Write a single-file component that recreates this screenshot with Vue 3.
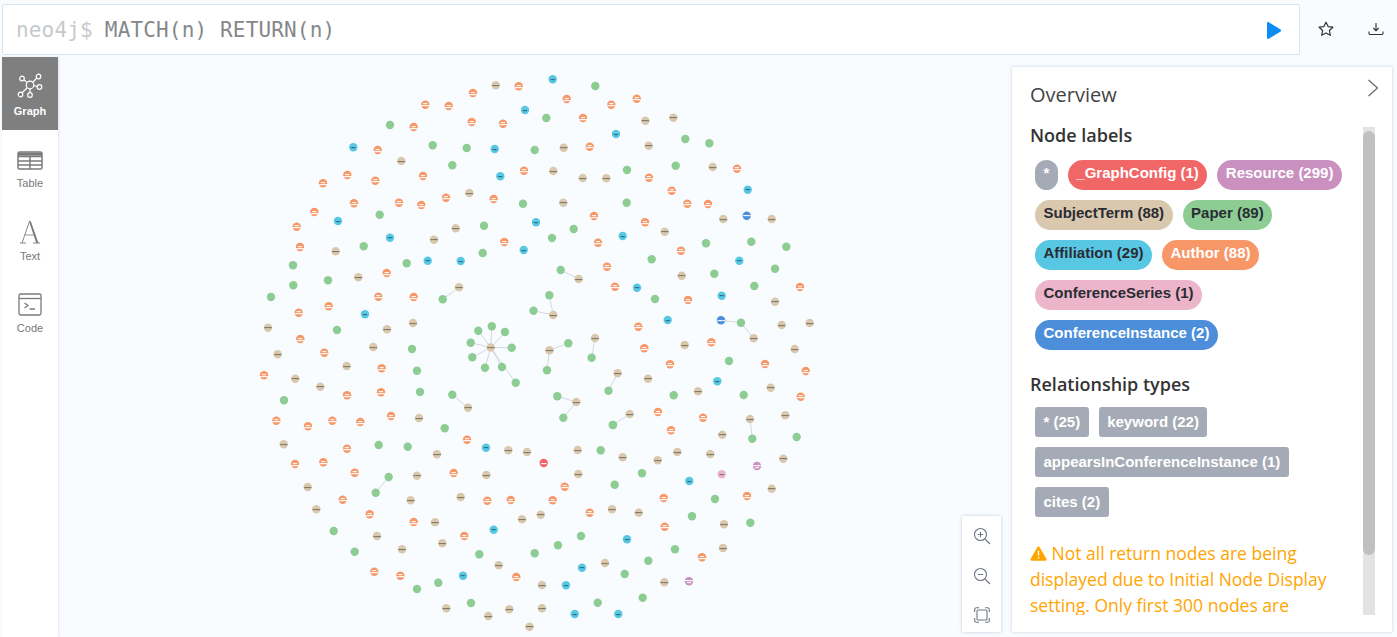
<script setup>
const colors = {
  g: '#8dcc93', t: '#d9c8ae', o: '#f79767', b: '#57c7e3',
  d: '#4c8eda', r: '#f16667', p: '#c990c0', k: '#ecb5c9'
}
// captions are tiny at this zoom level, only the colour tells them apart
const captions = {
  t: ['keyword'], o: ['Jens', 'Lehmann'], b: ['Univ.'],
  d: ['ISWC 18'], r: ['config'], p: ['Resource', 'item'], k: ['ISWC']
}
const captionColor = { o: '#fff', d: '#fff', r: '#fff', p: '#fff', t: '#7a7262', b: '#2a6272', k: '#7a7262' }

const raw = `t 495.7 85.3,o 518.7 86.3,o 473 93,o 425.3 104.7,o 448.7 106,b 525 110,g 390 125,o 413.7 127,o 471.7 122,o 503 123.7,
b 353.3 147.3,o 377.7 150,g 432.7 145.3,g 466.7 148,b 494.7 149,g 534.7 150,t 401.3 161,g 452.3 165.3,o 524 170.7,o 347.3 175,
o 323 183.3,o 375.3 180.7,o 423 176,b 500.3 176.3,t 469.3 193,o 446 197.7,o 493.7 199,g 523 203.7,o 354 203.3,o 399 202.7,
o 421.3 205,o 314.3 212,g 379.7 214.7,b 338 221,b 536 222.3,o 296.7 226.7,g 484 225.7,t 455.7 228.3,b 390 237.7,t 434 239.7,
o 504.3 242,o 300 247,g 363.7 246.3,t 335.7 251.3,b 523.7 250,g 482.7 253,b 427.7 260.7,b 460.7 261,g 406.7 263.3,g 293 265.3,
o 386.7 273,t 358.3 277.3,g 328 280.3,g 293.3 285.3,t 459 287.3,g 271 297,o 378.3 296.7,o 413.7 297,g 442.7 299.3,o 298.7 312.7,
o 328.7 306.3,b 365 314.3,g 533.5 310.7,t 268 327.7,g 337 330,t 387 329.3,t 413 323,o 300.3 339,t 373.3 347,g 412 349,
t 277.7 354.3,o 324.3 352.7,t 490.8 347.5,g 491.8 326.3,g 478.3 330.7,g 505 332,g 470.7 342.7,g 511.7 347.7,g 472.3 357.3,g 485 367.7,
g 502 367,g 515.7 382.7,t 468 407.7,g 452.3 394.7,t 553.2 315,t 549.5 350.3,g 568.3 343.3,g 547 370.3,t 595 338,g 591.6 357.8,
t 576.3 402,g 557.3 396.3,g 563.3 417.7,t 617.6 373.3,g 608.5 390.8,g 612.8 425,
b 552.7 79.3,g 595.3 86,o 566.7 99,o 611.3 104.7,o 636.7 98.7,g 546.3 118,o 583 118,t 645.3 120.7,t 673.3 117.7,b 616 134,
t 563.7 147.7,o 589.7 146.7,t 648.7 145.7,g 685.3 139,g 709.3 143.3,t 553.3 171,t 582.7 178,t 606.3 178.3,g 627 170,g 675.7 165.7,
t 712.7 167,o 737 168.7,o 649 177.7,o 671.7 190.7,b 747.7 189.7,t 563.3 202.7,g 626.7 202.7,o 687.3 203.7,o 708 204,d 746.7 215.7,
t 723.3 219,t 771.7 219,o 594 216,o 645 222.3,g 573.7 229,t 664.7 231.7,b 622.7 236,g 552 238,o 598 242.7,g 706 243.3,
g 751.3 241.7,g 786.3 246.7,o 681 250.7,b 739.3 260.7,g 651.7 259.3,o 607 266.7,g 775 268.7,t 681.7 275.7,g 714.3 273.7,g 560.7 270,
t 578.7 279,o 615 286.7,b 637 287.7,g 754.3 286,o 800 287,b 721.7 295.7,g 655 299,o 688 300,t 775 301.7,g 549.3 295.3,
b 667.7 320,d 721 320.3,g 741 322.7,t 753.7 338.3,t 781.7 325,t 809.7 323,o 638.3 326.7,o 644.3 348.3,t 684.7 345,o 711.3 342.3,
t 794.7 349,o 264 375.3,t 295.3 378.7,t 346.7 366,o 381.7 368.3,g 417 370.7,t 320.3 386.7,o 347 395.3,o 381 392.3,g 420 392,
g 284 400.3,o 276.3 420.7,o 308 426.3,o 332.3 420.7,o 360.3 422,o 391 416,t 419 418,g 444.7 428.3,o 467 439.7,t 283.7 444.3,
o 347 448.7,g 378.7 445,g 407.7 446.7,t 437 454.3,b 486 447.7,t 508.3 450.3,t 527 452,o 295 464,o 323.3 462.3,o 354.7 472.7,
g 388.7 477,t 417 475.7,o 453.7 473,t 486.3 475,t 307.7 487,g 375.7 492.7,t 410.7 500.3,t 460.7 497,o 487.3 500.7,o 510.7 500,
o 342.7 499.7,t 316.3 509.3,o 369.7 514.3,o 413.7 522,t 435 522.3,t 522 519.3,t 540.7 514.7,b 493.7 529.7,g 333.7 531,t 377 536,
o 464.3 536,t 442.3 543.3,t 402 549.3,g 354.7 551.7,g 479.3 554.3,g 534.7 553.3,t 498.7 565.3,o 374.3 571.7,o 400.3 575.7,b 463 575.7,
o 516.3 577,g 438.3 582.7,g 417 589,t 542 585,g 471 603,t 446.3 608.3,t 509.3 609.3,t 542 608.3,t 488.3 616,t 529.5 626.8,
o 670 364.3,g 729 361,o 765 364,o 805.7 371,t 648 378.7,b 717.3 381.3,t 698 391.3,t 770.7 387.7,g 673.7 395.3,g 743.7 395,
o 800.7 396.7,t 785.3 415.3,o 658 412,o 703 417.7,t 750 419,t 629.7 414,g 613 425,o 671 430.3,g 752.3 438.7,g 796.7 437,
t 722.3 434.7,t 577.7 450,g 600.7 450.3,t 622.7 457.3,t 677.3 452,t 710.3 454,t 657.7 460.3,r 543.7 463,t 578.3 474,g 642 473.3,
k 721.7 474.3,p 757 466,t 783.3 458.7,b 689.3 481,g 614.7 484.7,o 564.7 486.7,t 771.7 488.7,o 663.7 498,o 747 496,g 715 499,
o 552.7 500.3,o 589.7 512.7,t 612 509.3,t 638.7 512.7,g 692 516.3,t 724 524.3,g 750.3 522.7,o 664.7 526.7,g 581 536,b 627 539.3,
g 558 545.3,t 605 563,g 648.3 560.7,g 675 549.3,t 723 548,o 702 557.3,b 582 567.7,g 624.7 574,b 566 585.3,t 664.3 582.3,
p 689 581.3,g 642.7 597.7,g 597.7 602.7,b 574.7 614,b 618.3 614`

const nodes = raw.split(',').map((s) => {
  const [type, x, y] = s.trim().split(' ')
  return { type, x: +x, y: +y }
})

const c = [490.8, 347.5]
const edges = [
  [c[0], c[1], 491.8, 326.3], [c[0], c[1], 478.3, 330.7], [c[0], c[1], 505, 332],
  [c[0], c[1], 470.7, 342.7], [c[0], c[1], 511.7, 347.7], [c[0], c[1], 472.3, 357.3],
  [c[0], c[1], 485, 367.7], [c[0], c[1], 502, 367], [c[0], c[1], 515.7, 382.7],
  [442.7, 299.3, 459, 287.3], [560.7, 270, 578.7, 279], [533.5, 310.7, 553.2, 315],
  [549.3, 295.3, 553.2, 315], [549.5, 350.3, 568.3, 343.3], [549.5, 350.3, 547, 370.3],
  [595, 338, 591.6, 357.8], [452.3, 394.7, 468, 407.7], [388.7, 477, 375.7, 492.7],
  [617.6, 373.3, 608.5, 390.8], [576.3, 402, 557.3, 396.3], [576.3, 402, 563.3, 417.7],
  [629.7, 414, 613, 425], [750, 419, 752.3, 438.7], [721, 320.3, 741, 322.7],
  [741, 322.7, 753.7, 338.3]
]

const nodeLabels = [
  { text: '*', bg: '#a5abb6', fg: '#fff' },
  { text: '_GraphConfig (1)', bg: '#f16667', fg: '#fff' },
  { text: 'Resource (299)', bg: '#c990c0', fg: '#fff' },
  { text: 'SubjectTerm (88)', bg: '#d9c8ae', fg: '#2a2c34' },
  { text: 'Paper (89)', bg: '#8dcc93', fg: '#2a2c34' },
  { text: 'Affiliation (29)', bg: '#57c7e3', fg: '#2a2c34' },
  { text: 'Author (88)', bg: '#f79767', fg: '#fff' },
  { text: 'ConferenceSeries (1)', bg: '#ecb5c9', fg: '#2a2c34' },
  { text: 'ConferenceInstance (2)', bg: '#4c8eda', fg: '#fff' }
]
const relTypes = ['* (25)', 'keyword (22)', 'appearsInConferenceInstance (1)', 'cites (2)']
</script>

<template>
  <div class="page">
    <header class="topbar">
      <div class="editor">
        <span class="prompt">neo4j$</span>
        <span class="query">MATCH(n) RETURN(n)</span>
        <svg class="run" width="17" height="19" viewBox="0 0 17 19">
          <path d="M2 2.2v14.6c0 1 .9 1.5 1.7 1L15.6 10.4c.7-.4.7-1.4 0-1.8L3.7 1.2C2.9.7 2 1.2 2 2.2z" fill="#0b8df5" />
        </svg>
      </div>
      <div class="top-icons">
        <svg width="16" height="16" viewBox="0 0 16 16">
          <path d="M8 1.2l2.1 4.4 4.8.6-3.5 3.3.9 4.8L8 11.9l-4.3 2.4.9-4.8L1.1 6.2l4.8-.6z" fill="none" stroke="#2f3338" stroke-width="1.2" stroke-linejoin="round" />
        </svg>
        <svg width="16" height="14" viewBox="0 0 16 14">
          <path d="M8 1v7.5M5.3 6L8 8.7 10.7 6M1 9.5v1.7c0 .7.5 1.3 1.3 1.3h11.4c.8 0 1.300-.6 1.300-1.300V9.500" fill="none" stroke="#2f3338" stroke-width="1.1" />
        </svg>
      </div>
    </header>

    <div class="main">
      <nav class="sidebar">
        <div class="tab active">
          <svg width="26" height="26" viewBox="0 0 26 26" fill="none" stroke="#fff" stroke-width="1.2">
            <circle cx="13" cy="12" r="3.8" />
            <circle cx="5" cy="5.5" r="2.3" />
            <circle cx="21.5" cy="3.5" r="2.3" />
            <circle cx="22.5" cy="14" r="2.3" />
            <circle cx="3.5" cy="21.5" r="2.3" />
            <circle cx="13" cy="22" r="2.3" />
            <path d="M7 7l3.3 2.6M15.5 9.5l4.4-4.5M16.8 12.6l3.4.9M10.3 14.800l-5.200 5M13 15.800v3.900" />
          </svg>
          <span>Graph</span>
        </div>
        <div class="tab">
          <svg width="26" height="20" viewBox="0 0 26 20" fill="none" stroke="#7b7b7b" stroke-width="1.5">
            <rect x="1" y="1" width="24" height="17" rx="1.5" />
            <path d="M1 5.5h24M1 10h24M1 14h24M13 5.5V18" />
            <path d="M1 3.2h24" stroke-width="3" />
          </svg>
          <span>Table</span>
        </div>
        <div class="tab">
          <svg width="22" height="24" viewBox="0 0 22 24" fill="none" stroke="#7b7b7b">
            <path d="M1 23h6M14 23h7M3 23L10.6 1h.6L19 23" stroke-width=".9" />
            <path d="M5.8 15h10.5" stroke-width=".8" />
            <path d="M11 2l7 21" stroke-width="1.5" />
          </svg>
          <span>Text</span>
        </div>
        <div class="tab">
          <svg width="24" height="23" viewBox="0 0 24 23" fill="none" stroke="#7b7b7b" stroke-width="1.3">
            <rect x="1" y="1" width="22" height="21" rx="1.5" />
            <path d="M1 5.5h22" />
            <path d="M6.5 10l3.5 2.5-3.5 2.5M11.5 16H17" />
          </svg>
          <span>Code</span>
        </div>
      </nav>

      <section class="graph">
        <svg class="canvas" width="1339" height="580" viewBox="58 57 1339 580">
          <line v-for="(e, i) in edges" :key="i" :x1="e[0]" :y1="e[1]" :x2="e[2]" :y2="e[3]" class="edge" />
          <g v-for="(n, i) in nodes" :key="i">
            <circle :cx="n.x" :cy="n.y" r="4.2" :fill="colors[n.type]" />
            <template v-if="captions[n.type]">
              <text
                v-for="(line, j) in captions[n.type]"
                :key="j"
                :x="n.x"
                :y="n.y + 0.6 + (j - (captions[n.type].length - 1) / 2) * 2.2"
                :fill="captionColor[n.type]"
                :stroke="captionColor[n.type]"
                class="caption"
              >{{ line }}</text>
            </template>
          </g>
        </svg>

        <div class="zoom-box">
          <svg width="18" height="18" viewBox="0 0 18 18" fill="none" stroke="#6f7680" stroke-width="1.1">
            <circle cx="7.5" cy="7.5" r="6" />
            <path d="M12 12l5 5M7.5 4.8v5.4M4.8 7.5h5.4" />
          </svg>
          <svg width="18" height="18" viewBox="0 0 18 18" fill="none" stroke="#6f7680" stroke-width="1.1">
            <circle cx="7.5" cy="7.5" r="6" />
            <path d="M12 12l5 5M4.8 7.5h5.4" />
          </svg>
          <svg width="16" height="16" viewBox="0 0 16 16" fill="none" stroke="#6f7680" stroke-width="1.1">
            <rect x="3" y="3" width="10" height="10" rx="1" />
            <path d="M.7 5V2.5C.7 1.5 1.5.7 2.5.7H5M11 .7h2.5c1 0 1.8.8 1.8 1.8V5M15.3 11v2.5c0 1-.8 1.8-1.8 1.8H11M5 15.3H2.500c-1 0-1.800-.8-1.800-1.800V11" />
          </svg>
        </div>

        <aside class="overview">
          <h2>Overview</h2>
          <svg class="chevron" width="12" height="18" viewBox="0 0 12 18">
            <path d="M1.5 1l9 8-9 8" fill="none" stroke="#666" stroke-width="1.2" />
          </svg>
          <div class="scroll-area">
            <h3>Node labels</h3>
            <div class="tags first">
              <span
                v-for="l in nodeLabels"
                :key="l.text"
                class="pill"
                :style="{ background: l.bg, color: l.fg }"
              >{{ l.text }}</span>
            </div>
            <h3 class="rel-title">Relationship types</h3>
            <div class="tags">
              <span v-for="r in relTypes" :key="r" class="rel">{{ r }}</span>
            </div>
            <p class="warning">
              <svg width="17" height="15" viewBox="0 0 17 15">
                <path d="M8.5.5c.4 0 .8.2 1 .6l7 12c.4.7-.1 1.6-1 1.6h-14c-.9 0-1.400-.9-1-1.600l7-12c.2-.4.6-.6 1-.6z" fill="#ffa500" />
                <path d="M7.7 4.8h1.600l-.2 5H7.900zM7.700 11h1.600v1.600H7.700z" fill="#fff" />
              </svg>
              Not all return nodes are being displayed due to Initial Node Display setting. Only first 300 nodes are
              displayed.
            </p>
          </div>
          <div class="scrollbar"><div class="thumb"></div></div>
        </aside>
      </section>
    </div>
  </div>
</template>

<style scoped>
.page {
  height: 637px;
  display: flex;
  flex-direction: column;
  background: #f9fcff;
  overflow: hidden;
}

.topbar {
  display: flex;
  align-items: center;
  height: 57px;
  padding: 4px 0 3px 2px;
  box-sizing: border-box;
}

.editor {
  width: 1298px;
  height: 51px;
  box-sizing: border-box;
  display: flex;
  align-items: center;
  padding: 1px 17px 0 13px;
  background: #fff;
  border: 1px solid #d7e5f1;
  border-radius: 2px;
  font-family: "DejaVu Sans Mono", monospace;
  font-size: 21px;
  letter-spacing: 0.16px;
}

.prompt {
  color: #c6c9cc;
  margin-right: 12px;
}

.query {
  color: #85878a;
}

.run {
  margin-left: auto;
  margin-top: 1px;
}

.top-icons {
  flex: 1;
  display: flex;
  justify-content: space-between;
  align-items: center;
  padding: 0 13px 0 18px;
}

.main {
  flex: 1;
  display: flex;
  min-height: 0;
}

.sidebar {
  width: 56px;
  margin-left: 2px;
  background: #fff;
  box-shadow: 1px 0 2px rgba(200, 210, 220, 0.5);
  position: relative;
  z-index: 1;
}

.tab {
  height: 72.5px;
  display: flex;
  flex-direction: column;
  align-items: center;
  justify-content: flex-end;
  padding-bottom: 12px;
  box-sizing: border-box;
  font-family: "Liberation Sans", sans-serif;
  font-size: 11px;
  color: #777;
}

.tab span {
  margin-top: 6px;
  line-height: 13px;
}

.tab.active {
  background: #7f7f7f;
  color: #fff;
  font-weight: 700;
}

.graph {
  flex: 1;
  position: relative;
}

.canvas {
  position: absolute;
  left: 0;
  top: 0;
}

.edge {
  stroke: #c9cdd8;
  stroke-width: 0.8;
}

.caption {
  font-family: "Liberation Sans", sans-serif;
  font-size: 1.7px;
  font-weight: 700;
  stroke-width: 0.25;
  text-anchor: middle;
}

.zoom-box {
  position: absolute;
  left: 904px;
  top: 459px;
  width: 39px;
  height: 116px;
  box-sizing: border-box;
  padding: 11px 0 9px;
  background: #fff;
  box-shadow: 0 0 3px rgba(120, 140, 170, 0.45);
  display: flex;
  flex-direction: column;
  align-items: center;
  justify-content: space-between;
}

.overview {
  position: absolute;
  left: 954px;
  top: 10px;
  width: 380px;
  height: 565px;
  box-sizing: border-box;
  padding: 0 18px;
  background: #fff;
  box-shadow: 0 0 3px rgba(120, 140, 170, 0.4);
  font-family: "Open Sans", sans-serif;
}

.overview h2 {
  margin: 0;
  padding-top: 14px;
  font-size: 20px;
  line-height: 28px;
  font-weight: 400;
  color: #444;
}

.chevron {
  position: absolute;
  right: 13px;
  top: 12px;
}

.scroll-area {
  height: 492px;
  margin-top: 14px;
  width: 326px;
  overflow: hidden;
}

.overview h3 {
  margin: 0;
  font-size: 18px;
  line-height: 24px;
  font-weight: 600;
  color: #333;
}

.overview .rel-title {
  margin-top: 22px;
}

.tags {
  display: flex;
  flex-wrap: wrap;
  gap: 10px;
  padding: 11px 0 0 5px;
}

.tags.first {
  padding-top: 13px;
}

.pill,
.rel {
  height: 30px;
  box-sizing: border-box;
  padding: 0 8.5px;
  border-radius: 15px;
  font-family: "Liberation Sans", sans-serif;
  font-size: 15px;
  font-weight: 700;
  line-height: 26px;
}

.rel {
  border-radius: 3px;
  background: #a5abb6;
  color: #fff;
  line-height: 30px;
}

.warning {
  margin: 23px 0 0;
  font-size: 17.5px;
  line-height: 26px;
  color: #ffa500;
}

.warning svg {
  vertical-align: -1px;
}

.scrollbar {
  position: absolute;
  left: 351px;
  top: 60px;
  width: 12px;
  height: 488px;
  background: #e3e3e3;
}

.thumb {
  height: 424px;
  margin-top: 4px;
  background: #c0c0c0;
  border-radius: 6px;
}
</style>

<style>
html, body {
  margin: 0;
  background: #f9fcff;
  overflow: hidden;
}
</style>
